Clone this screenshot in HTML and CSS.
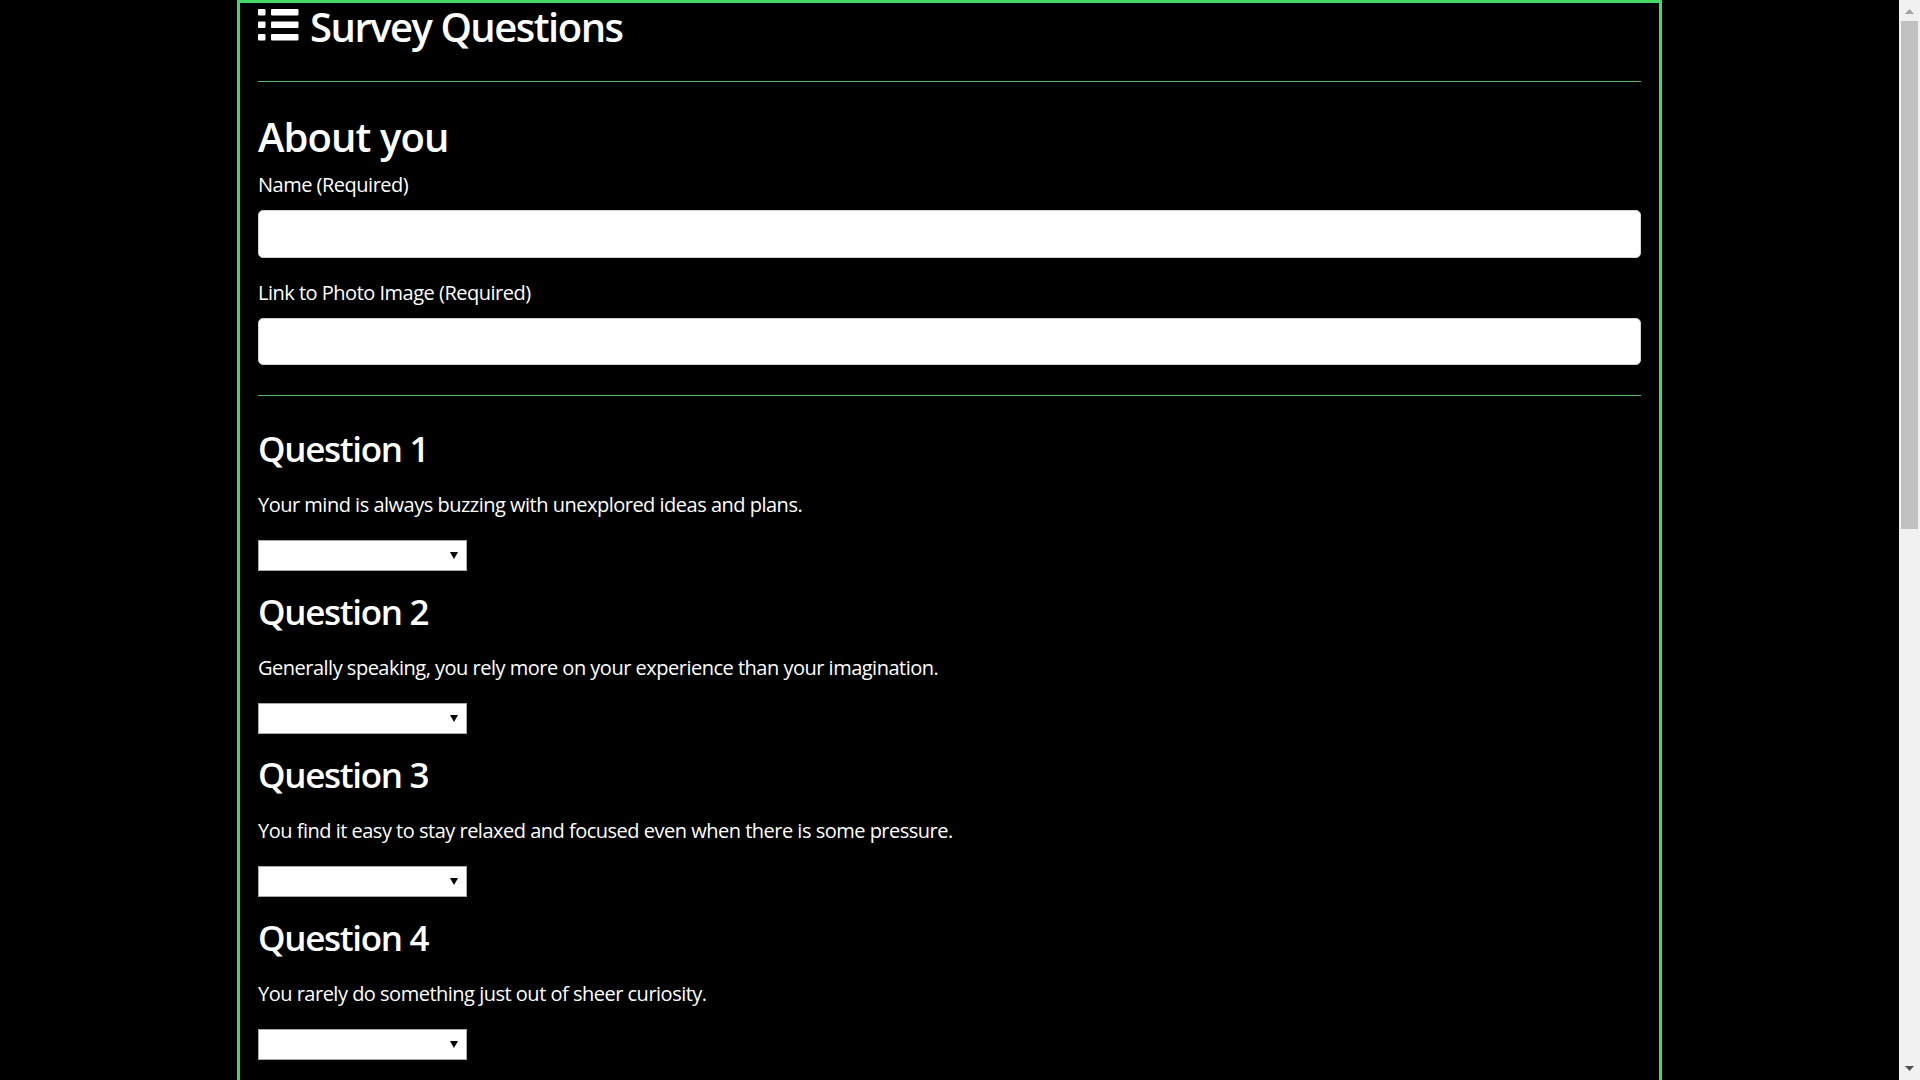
FILE: index.html
```html
<!DOCTYPE html>
<html lang="en">
<head>
<meta charset="utf-8">
<title>Survey Questions</title>
<link rel="stylesheet" href="styles.css">
</head>
<body>
<div class="page">
<div class="container">
  <h2 class="title">
    <svg class="list-icon" viewBox="0 0 41 32" width="41" height="32" aria-hidden="true">
      <rect x="0" y="0" width="7.5" height="6.5" rx="1" fill="#fff"/>
      <rect x="0" y="12.5" width="7.5" height="6.5" rx="1" fill="#fff"/>
      <rect x="0" y="25" width="7.5" height="6.5" rx="1" fill="#fff"/>
      <rect x="13" y="0" width="27.5" height="6.5" rx="1" fill="#fff"/>
      <rect x="13" y="12.5" width="27.5" height="6.5" rx="1" fill="#fff"/>
      <rect x="13" y="25" width="27.5" height="6.5" rx="1" fill="#fff"/>
    </svg>Survey Questions</h2>
  <hr class="rule rule-top">
  <form class="survey">
    <h2 class="section-title">About you</h2>
    <div class="form-group">
      <label for="name">Name (Required)</label>
      <input id="name" class="form-control" type="text">
    </div>
    <div class="form-group">
      <label for="photo">Link to Photo Image (Required)</label>
      <input id="photo" class="form-control" type="text">
    </div>
    <hr class="rule rule-mid">

    <div class="question q-first">
      <h3>Question 1</h3>
      <p>Your mind is always buzzing with unexplored ideas and plans.</p>
      <select class="answer"><option></option><option>1 (Strongly Disagree)</option><option>2</option><option>3</option><option>4</option><option>5 (Strongly Agree)</option></select>
    </div>
    <div class="question">
      <h3>Question 2</h3>
      <p>Generally speaking, you rely more on your experience than your imagination.</p>
      <select class="answer"><option></option><option>1 (Strongly Disagree)</option><option>2</option><option>3</option><option>4</option><option>5 (Strongly Agree)</option></select>
    </div>
    <div class="question">
      <h3>Question 3</h3>
      <p>You find it easy to stay relaxed and focused even when there is some pressure.</p>
      <select class="answer"><option></option><option>1 (Strongly Disagree)</option><option>2</option><option>3</option><option>4</option><option>5 (Strongly Agree)</option></select>
    </div>
    <div class="question">
      <h3>Question 4</h3>
      <p>You rarely do something just out of sheer curiosity.</p>
      <select class="answer"><option></option><option>1 (Strongly Disagree)</option><option>2</option><option>3</option><option>4</option><option>5 (Strongly Agree)</option></select>
    </div>
    <div class="question">
      <h3>Question 5</h3>
      <p>People can rarely upset you.</p>
      <select class="answer"><option></option><option>1 (Strongly Disagree)</option><option>2</option><option>3</option><option>4</option><option>5 (Strongly Agree)</option></select>
    </div>
    <div class="question">
      <h3>Question 6</h3>
      <p>It is often difficult for you to relate to other people’s feelings.</p>
      <select class="answer"><option></option><option>1 (Strongly Disagree)</option><option>2</option><option>3</option><option>4</option><option>5 (Strongly Agree)</option></select>
    </div>
    <div class="question">
      <h3>Question 7</h3>
      <p>In a discussion, truth should be more important than people’s sensitivities.</p>
      <select class="answer"><option></option><option>1 (Strongly Disagree)</option><option>2</option><option>3</option><option>4</option><option>5 (Strongly Agree)</option></select>
    </div>
    <div class="question">
      <h3>Question 8</h3>
      <p>You rarely get carried away by fantasies and ideas.</p>
      <select class="answer"><option></option><option>1 (Strongly Disagree)</option><option>2</option><option>3</option><option>4</option><option>5 (Strongly Agree)</option></select>
    </div>
    <div class="question">
      <h3>Question 9</h3>
      <p>You think that everyone’s views should be respected regardless of whether they are supported by facts or not.</p>
      <select class="answer"><option></option><option>1 (Strongly Disagree)</option><option>2</option><option>3</option><option>4</option><option>5 (Strongly Agree)</option></select>
    </div>
    <div class="question">
      <h3>Question 10</h3>
      <p>You feel more energetic after spending time with a group of people.</p>
      <select class="answer"><option></option><option>1 (Strongly Disagree)</option><option>2</option><option>3</option><option>4</option><option>5 (Strongly Agree)</option></select>
    </div>
    <button type="submit" class="btn-submit">Submit</button>
  </form>
</div>
</div>
<div class="scrollbar" aria-hidden="true">
  <div class="sb-btn">
    <svg width="21" height="21" viewBox="0 0 21 21"><path d="M6 14h9l-4.5-5z" fill="#a3a3a3"/></svg>
  </div>
  <div class="sb-thumb"></div>
  <div class="sb-track"></div>
  <div class="sb-btn">
    <svg width="21" height="21" viewBox="0 0 21 21"><path d="M6 7h9l-4.5 5z" fill="#505050"/></svg>
  </div>
</div>
</body>
</html>
```
FILE: styles.css
```css
html {
  background: #000;
}
body {
  margin: 0;
  background: #000;
  color: #fff;
  font-family: "Open Sans", "Noto Sans", "Liberation Sans", sans-serif;
  font-size: 20px;
  line-height: 30px;
  letter-spacing: -0.025em;
  display: flex;
  align-items: flex-start;
}
.page {
  flex: 1;
  min-width: 0;
}
.scrollbar {
  flex: none;
  width: 21px;
  height: 100vh;
  position: sticky;
  top: 0;
  background: #f1f1f1;
  display: flex;
  flex-direction: column;
}
.sb-btn {
  height: 21px;
  flex: none;
}
.sb-btn svg {
  display: block;
}
.sb-thumb {
  flex: none;
  height: 508px;
  margin: 0 2px;
  background: #c1c1c1;
}
.sb-track {
  flex: 1;
}
.container {
  box-sizing: border-box;
  width: 1425px;
  margin: 0 auto;
  border: 3px solid #46d866;
  border-bottom: none;
  padding: 0 18px 97px 18px;
}
.title {
  margin: 0 0 10px 0;
  font-size: 40px;
  line-height: 48px;
  font-weight: 600;
  letter-spacing: -1.5px;
  display: flex;
  align-items: center;
}
.list-icon {
  display: block;
  margin: 0 11px 4px 0;
  flex: none;
}
.rule {
  border: 0;
  height: 1px;
  background: #55b865;
  margin: 0;
}
.rule-top {
  margin: 30px 0 0 0;
}
.rule-mid {
  margin: 10px 0 0 0;
}
.section-title {
  margin: 31px 0 9px 0;
  font-size: 40px;
  line-height: 48px;
  font-weight: 600;
  letter-spacing: -0.9px;
}
.form-group {
  display: flex;
  flex-direction: column;
  margin-bottom: 20px;
}
.form-group label {
  margin-bottom: 10px;
}
.form-control {
  box-sizing: border-box;
  height: 47.5px;
  width: 100%;
  margin: 0;
  border: 1px solid #ced4da;
  border-radius: 5px;
  background: #fff;
  font: inherit;
  padding: 0 15px;
}
.survey {
  display: flex;
  flex-direction: column;
}
.question {
  display: flex;
  flex-direction: column;
  align-items: flex-start;
}
.question h3 {
  margin: 0 0 20px 0;
  font-size: 35px;
  line-height: 42px;
  font-weight: 600;
  letter-spacing: -1.3px;
}
.q-first h3 {
  margin-top: 32px;
}
.question p {
  margin: 0 0 20px 0;
}
.answer {
  -webkit-appearance: none;
  appearance: none;
  box-sizing: border-box;
  width: 208.5px;
  height: 31px;
  margin: 0 0 20px 0;
  border: 1px solid #a9a9a9;
  border-radius: 0;
  background: #fff url("data:image/svg+xml,%3Csvg xmlns='http://www.w3.org/2000/svg' width='8' height='7'%3E%3Cpath d='M0 0h8l-4 7z' fill='%23000'/%3E%3C/svg%3E") no-repeat right 8px center;
  font: inherit;
  font-size: 16px;
}
.btn-submit {
  align-self: flex-start;
  height: 47.5px;
  padding: 0 15px;
  border: 1px solid #46d866;
  border-radius: 5px;
  background: #000;
  color: #fff;
  font: inherit;
}
```
